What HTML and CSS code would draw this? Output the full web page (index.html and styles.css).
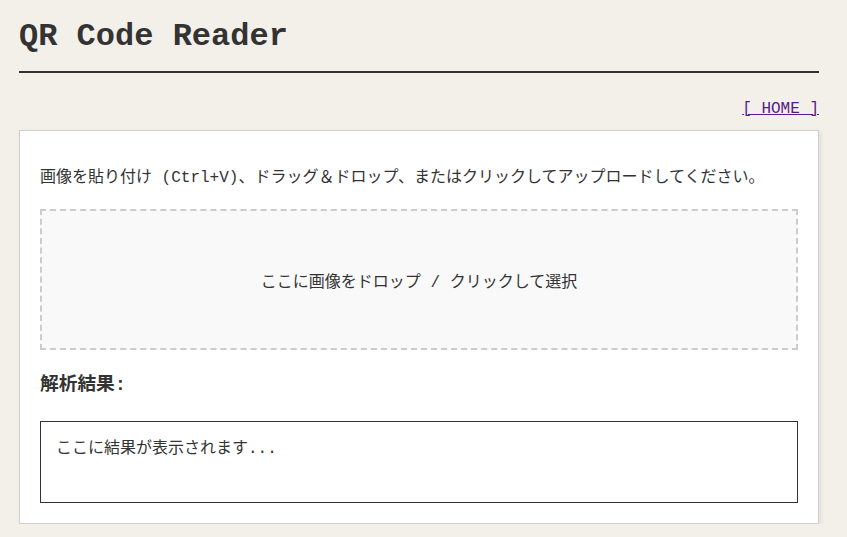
FILE: index.html
```html
<!DOCTYPE html>
<html lang="ja">
<head>
<meta charset="utf-8">
<title>QR Code Reader</title>
<link rel="stylesheet" href="styles.css">
</head>
<body>
<div class="page">
  <h1 class="title">QR Code Reader</h1>
  <nav class="nav"><a class="home" href="#">[ HOME ]</a></nav>
  <main class="card">
    <p class="intro">画像を貼り付け (Ctrl+V)、ドラッグ＆ドロップ、またはクリックしてアップロードしてください。</p>
    <div class="drop">ここに画像をドロップ / クリックして選択</div>
    <h3 class="result-title">解析結果:</h3>
    <div class="result">ここに結果が表示されます...</div>
  </main>
</div>
</body>
</html>
```

FILE: styles.css
```css
html, body {
  margin: 0;
  padding: 0;
  background: #f3f0ea;
}
body {
  font-family: "Courier New", "Liberation Mono", "Noto Sans CJK JP", monospace;
  font-size: 16px;
  color: #333;
}
.page {
  width: 800px;
  padding: 19px 0 0 19px;
}
.title {
  margin: 0;
  font-size: 32px;
  line-height: 36px;
  font-weight: bold;
  padding-bottom: 16px;
  border-bottom: 2px solid #333;
  color: #333;
}
.nav {
  text-align: right;
  margin-top: 27px;
  line-height: 18px;
  height: 18px;
}
.home {
  color: #551a8b;
  white-space: pre;
}
.card {
  margin-top: 12px;
  background: #fff;
  border: 1px solid #d0d0d0;
  box-shadow: 2px 2px 5px rgba(0,0,0,0.08);
  padding: 20px;
}
.intro {
  margin: 15px 0 0;
  line-height: 24px;
  height: 24px;
}
.drop {
  margin-top: 19px;
  border: 2px dashed #ccc;
  background: #f9f9f9;
  height: 137px;
  display: flex;
  align-items: center;
  justify-content: center;
}
.result-title {
  margin: 23px 0 0;
  font-size: 18.72px;
  line-height: 24px;
}
.result {
  margin-top: 24px;
  border: 1px solid #333;
  padding: 15px;
  min-height: 50px;
  line-height: 24px;
}
```
